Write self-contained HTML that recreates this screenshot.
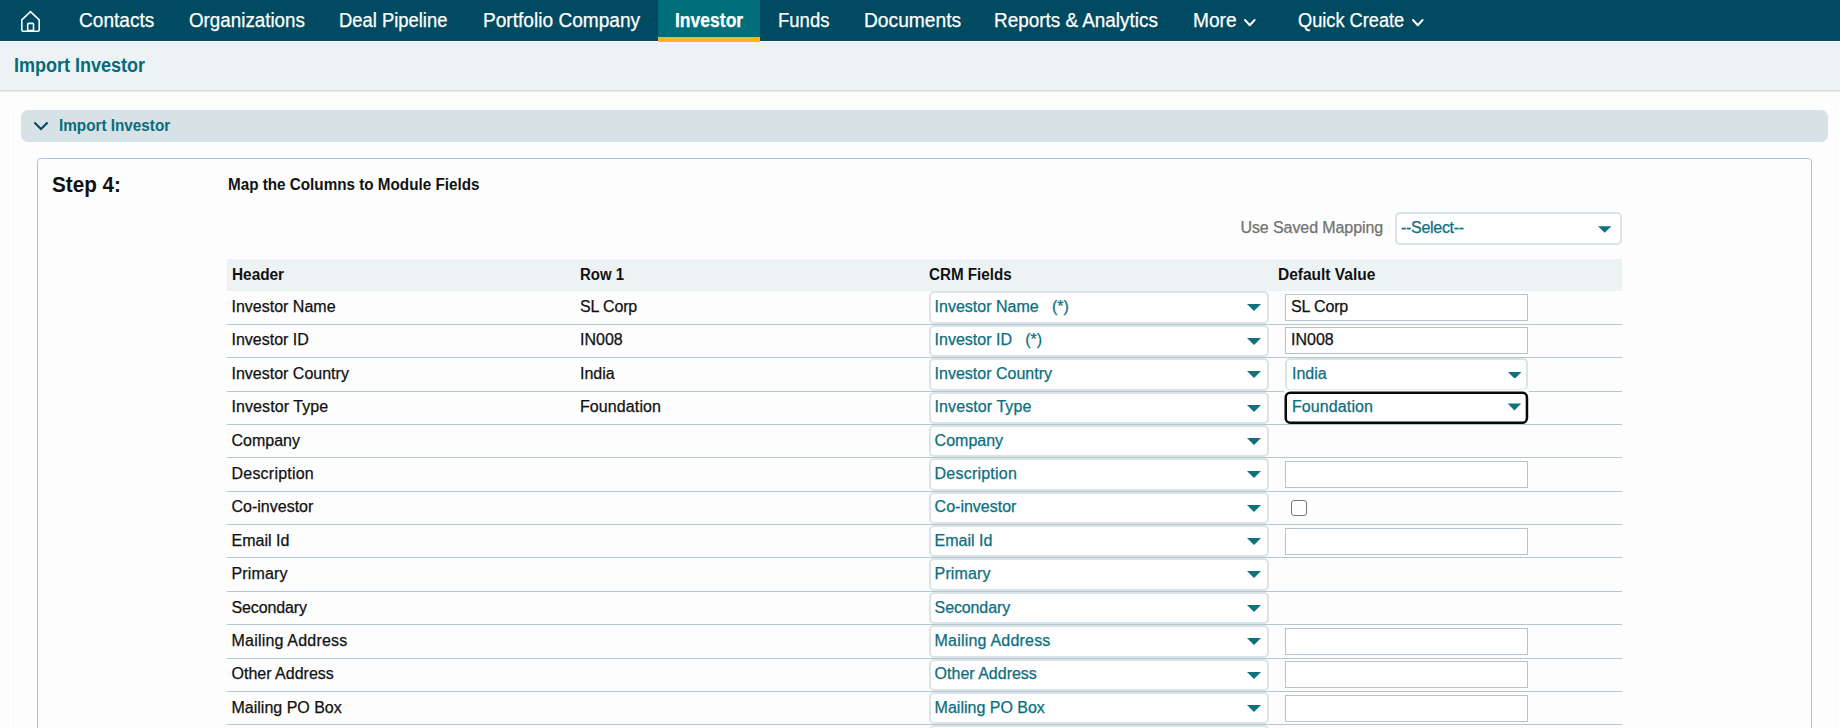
<!DOCTYPE html><html lang="en"><head><meta charset="utf-8"><title>Import Investor</title><style>
*{box-sizing:border-box;margin:0;padding:0}
html,body{width:1840px;height:728px;overflow:hidden;background:#fdfdfd;font-family:"Liberation Sans",sans-serif;font-size:16px;color:#111}
.abs{position:absolute}
#nav{position:absolute;left:0;top:0;width:1840px;height:41px;background:#004b62;z-index:2}
#nav .it{position:absolute;z-index:4;transform-origin:0 0;top:0;height:41px;line-height:41px;color:#fff;font-size:19.6px;white-space:nowrap;-webkit-text-stroke:0.25px}
#nav .act{position:absolute;left:658px;top:0;width:102px;height:42px;background:#006f7a;border-bottom:5px solid #fdb714;z-index:3}
#sub{position:absolute;left:0;top:41px;width:1840px;height:50px;background:#edf2f5;border-top:1px solid #fff;border-bottom:1px solid #d6d8da;box-shadow:0 1px 1px rgba(0,0,0,.07)}
#sub .t{position:absolute;left:13.5px;top:-2px;line-height:50px;font-size:20px;font-weight:bold;color:#046b7c;white-space:nowrap;transform-origin:0 0}
#outer{position:absolute;left:13px;top:103px;width:1823px;height:700px;border:1px solid #f8f8f8;border-top-color:#fbfbfb;border-radius:6px}
#bar{position:absolute;left:21px;top:110px;width:1807px;height:32px;background:#d7e2e6;border-radius:7px}
#bar .t{position:absolute;left:38px;top:0;line-height:32px;font-size:16px;font-weight:bold;color:#086c7d;white-space:nowrap;transform-origin:0 0}
#box{position:absolute;left:37px;top:158px;width:1775px;height:700px;border:1px solid #a8c3e0;border-radius:4px}
.step{position:absolute;left:51.5px;top:171px;font-size:22px;font-weight:bold;line-height:28px;white-space:nowrap;color:#111;transform-origin:0 0}
.map{position:absolute;left:227.5px;top:175px;font-size:16px;font-weight:bold;line-height:20px;white-space:nowrap;color:#111;transform-origin:0 0}
.usm{position:absolute;left:1240.5px;top:218px;font-size:16px;line-height:20px;color:#727272;white-space:nowrap;letter-spacing:-0.09px;-webkit-text-stroke:0.25px}
.sel{position:absolute;border:2px solid #dae4e8;border-radius:5px;background:#fefefe}
.sel .arr{position:absolute;right:6px;top:11px}
.fsel{border:2px solid #0a0a0a;border-radius:6px}
.st{position:absolute;font-size:16px;line-height:20px;white-space:nowrap;color:#0b6f80;-webkit-text-stroke:0.25px}
.inp{position:absolute;height:27px;border:1px solid #b2c5ce;background:#fefefe}
.chk{position:absolute;width:16px;height:16px;border:1.5px solid #767676;border-radius:3px;background:#fff}
#thead{position:absolute;left:227px;top:259px;width:1395px;height:32px;background:#edf2f5}
.th{position:absolute;transform-origin:0 0;top:259px;line-height:32px;font-weight:bold;font-size:16px;white-space:nowrap;color:#111}
.td{position:absolute;font-size:16px;line-height:20px;white-space:nowrap;color:#111;-webkit-text-stroke:0.25px}
.ln{position:absolute;left:227px;width:1395px;height:1px;background:#b4c7cf}
</style></head><body>
<div id="nav"><div class="act"></div>
<svg class="abs" style="left:20px;top:10px" width="22" height="23" viewBox="0 0 22 23" fill="none" stroke="#fff" stroke-width="1.6" stroke-linejoin="round" stroke-linecap="round"><path d="M1.8 9.8L10.5 1.7L19.2 9.8V19.9Q19.2 21.2 17.9 21.2H3.1Q1.8 21.2 1.8 19.9Z"/><rect x="7.7" y="13.4" width="5.8" height="7.2" rx="0.9"/></svg>
<div class="it" style="left:79.0px;transform:scaleX(0.974);">Contacts</div>
<div class="it" style="left:189.0px;transform:scaleX(0.9586);">Organizations</div>
<div class="it" style="left:338.7px;transform:scaleX(0.9391);">Deal Pipeline</div>
<div class="it" style="left:482.5px;transform:scaleX(0.9751);">Portfolio Company</div>
<div class="it" style="left:674.5px;transform:scaleX(0.8947);font-weight:bold;">Investor</div>
<div class="it" style="left:777.5px;transform:scaleX(0.9445);">Funds</div>
<div class="it" style="left:863.5px;transform:scaleX(0.98);">Documents</div>
<div class="it" style="left:994.0px;transform:scaleX(0.9645);">Reports &amp; Analytics</div>
<div class="it" style="left:1192.5px;transform:scaleX(0.9773);">More</div>
<div class="it" style="left:1297.5px;transform:scaleX(0.929);">Quick Create</div>
<svg class="abs" style="left:1243px;top:17.8px" width="14" height="10" viewBox="0 0 14 10" fill="none" stroke="#fff" stroke-width="2" stroke-linecap="round" stroke-linejoin="round"><path d="M2 2L6.8 7.2L11.6 2"/></svg>
<svg class="abs" style="left:1410.8px;top:17.8px" width="14" height="10" viewBox="0 0 14 10" fill="none" stroke="#fff" stroke-width="2" stroke-linecap="round" stroke-linejoin="round"><path d="M2 2L6.8 7.2L11.6 2"/></svg>
</div>
<div id="sub"><div class="t" style="left:13.6px;transform:scaleX(0.9)">Import Investor</div></div>
<div id="outer"></div>
<div id="bar"><svg class="abs" style="left:12px;top:10.9px" width="16" height="11" viewBox="0 0 16 11" fill="none" stroke="#064a5f" stroke-width="2.1" stroke-linecap="butt" stroke-linejoin="miter"><path d="M1.4 1.5L8 8L14.6 1.5"/></svg><div class="t" style="left:38.0px;transform:scaleX(0.955)">Import Investor</div></div>
<div id="box"></div>
<div class="step" style="left:51.5px;transform:scaleX(0.9403)">Step 4:</div>
<div class="map" style="left:227.7px;transform:scaleX(0.9525)">Map the Columns to Module Fields</div>
<div class="usm">Use Saved Mapping</div>
<div class="sel" style="left:1395px;top:212px;width:227px;height:33px"><svg class="arr" style="right:8.5px;top:11.6px" width="13.4" height="7" viewBox="0 0 14 7"><path d="M0 0H14L7 7Z" fill="#11707b"/></svg></div>
<div class="st" style="left:1401px;top:218px;letter-spacing:-0.3px">--Select--</div>
<div id="thead"></div>
<div class="th" style="left:231.58px;transform:scaleX(0.96)">Header</div>
<div class="th" style="left:580.0px;transform:scaleX(0.935)">Row 1</div>
<div class="th" style="left:928.82px;transform:scaleX(0.948)">CRM Fields</div>
<div class="th" style="left:1277.6px;transform:scaleX(0.968)">Default Value</div>
<div class="ln" style="top:324px"></div>
<div class="td" style="left:231.5px;top:297px;letter-spacing:0px">Investor Name</div>
<div class="td" style="left:580px;top:297px;letter-spacing:-0.15px">SL Corp</div>
<div class="sel" style="left:929px;top:291px;width:340px;height:33px"><svg class="arr" style="top:11px" width="14" height="7" viewBox="0 0 14 7"><path d="M0 0H14L7 7Z" fill="#11707b"/></svg></div>
<div class="st" style="left:934.6px;top:297px;letter-spacing:0px">Investor Name&nbsp;&nbsp;&nbsp;(*)</div>
<div class="inp" style="left:1285px;top:294px;width:243px"></div>
<div class="td" style="left:1291px;top:297px;letter-spacing:-0.15px">SL Corp</div>
<div class="ln" style="top:357px"></div>
<div class="td" style="left:231.5px;top:330px;letter-spacing:0px">Investor ID</div>
<div class="td" style="left:580px;top:330px;letter-spacing:0px">IN008</div>
<div class="sel" style="left:929px;top:325px;width:340px;height:32px"><svg class="arr" style="top:11px" width="14" height="7" viewBox="0 0 14 7"><path d="M0 0H14L7 7Z" fill="#11707b"/></svg></div>
<div class="st" style="left:934.6px;top:330px;letter-spacing:0px">Investor ID&nbsp;&nbsp;&nbsp;(*)</div>
<div class="inp" style="left:1285px;top:327px;width:243px"></div>
<div class="td" style="left:1291px;top:330px;letter-spacing:0px">IN008</div>
<div class="ln" style="top:391px"></div>
<div class="td" style="left:231.5px;top:364px;letter-spacing:0px">Investor Country</div>
<div class="td" style="left:580px;top:364px;letter-spacing:0px">India</div>
<div class="sel" style="left:929px;top:358px;width:340px;height:33px"><svg class="arr" style="top:11px" width="14" height="7" viewBox="0 0 14 7"><path d="M0 0H14L7 7Z" fill="#11707b"/></svg></div>
<div class="st" style="left:934.6px;top:364px;letter-spacing:0px">Investor Country</div>
<div class="sel" style="left:1285px;top:358px;width:242.7px;height:32px;border-bottom:1px solid #e6edef"><svg class="arr" style="top:11.6px;right:4.7px" width="13.4" height="6.8" viewBox="0 0 14 7"><path d="M0 0H14L7 7Z" fill="#11707b"/></svg></div>
<div class="st" style="left:1292px;top:364px;letter-spacing:0px">India</div>
<div class="ln" style="top:424px"></div>
<div class="td" style="left:231.5px;top:397px;letter-spacing:0.08px">Investor Type</div>
<div class="td" style="left:580px;top:397px;letter-spacing:0.1px">Foundation</div>
<div class="sel" style="left:929px;top:392px;width:340px;height:32px"><svg class="arr" style="top:11px" width="14" height="7" viewBox="0 0 14 7"><path d="M0 0H14L7 7Z" fill="#11707b"/></svg></div>
<div class="st" style="left:934.6px;top:397px;letter-spacing:0.08px">Investor Type</div>
<svg class="abs" style="left:1283px;top:390px" width="248" height="36" viewBox="0 0 248 36"><rect x="1" y="1" width="245" height="1.2" fill="#fdfdfd"/><rect x="2.75" y="2.8" width="241.2" height="29.9" rx="4.5" fill="#fefefe" stroke="#080808" stroke-width="2.5"/><path d="M224.7 13.6H238.1L231.4 20.4Z" fill="#11707b"/></svg>
<div class="st" style="left:1292px;top:397px;letter-spacing:0.1px">Foundation</div>
<div class="ln" style="top:457px"></div>
<div class="td" style="left:231.5px;top:431px;letter-spacing:0px">Company</div>
<div class="sel" style="left:929px;top:425px;width:340px;height:32px"><svg class="arr" style="top:11px" width="14" height="7" viewBox="0 0 14 7"><path d="M0 0H14L7 7Z" fill="#11707b"/></svg></div>
<div class="st" style="left:934.6px;top:431px;letter-spacing:0px">Company</div>
<div class="ln" style="top:491px"></div>
<div class="td" style="left:231.5px;top:464px;letter-spacing:0.22px">Description</div>
<div class="sel" style="left:929px;top:458px;width:340px;height:33px"><svg class="arr" style="top:11px" width="14" height="7" viewBox="0 0 14 7"><path d="M0 0H14L7 7Z" fill="#11707b"/></svg></div>
<div class="st" style="left:934.6px;top:464px;letter-spacing:0.22px">Description</div>
<div class="inp" style="left:1285px;top:461px;width:243px"></div>
<div class="ln" style="top:524px"></div>
<div class="td" style="left:231.5px;top:497px;letter-spacing:0px">Co-investor</div>
<div class="sel" style="left:929px;top:492px;width:340px;height:32px"><svg class="arr" style="top:11px" width="14" height="7" viewBox="0 0 14 7"><path d="M0 0H14L7 7Z" fill="#11707b"/></svg></div>
<div class="st" style="left:934.6px;top:497px;letter-spacing:0px">Co-investor</div>
<div class="chk" style="left:1291px;top:500px"></div>
<div class="ln" style="top:557px"></div>
<div class="td" style="left:231.5px;top:531px;letter-spacing:0px">Email Id</div>
<div class="sel" style="left:929px;top:525px;width:340px;height:32px"><svg class="arr" style="top:11px" width="14" height="7" viewBox="0 0 14 7"><path d="M0 0H14L7 7Z" fill="#11707b"/></svg></div>
<div class="st" style="left:934.6px;top:531px;letter-spacing:0px">Email Id</div>
<div class="inp" style="left:1285px;top:528px;width:243px"></div>
<div class="ln" style="top:591px"></div>
<div class="td" style="left:231.5px;top:564px;letter-spacing:0.14px">Primary</div>
<div class="sel" style="left:929px;top:558px;width:340px;height:33px"><svg class="arr" style="top:11px" width="14" height="7" viewBox="0 0 14 7"><path d="M0 0H14L7 7Z" fill="#11707b"/></svg></div>
<div class="st" style="left:934.6px;top:564px;letter-spacing:0.14px">Primary</div>
<div class="ln" style="top:624px"></div>
<div class="td" style="left:231.5px;top:598px;letter-spacing:-0.12px">Secondary</div>
<div class="sel" style="left:929px;top:592px;width:340px;height:32px"><svg class="arr" style="top:11px" width="14" height="7" viewBox="0 0 14 7"><path d="M0 0H14L7 7Z" fill="#11707b"/></svg></div>
<div class="st" style="left:934.6px;top:598px;letter-spacing:-0.12px">Secondary</div>
<div class="ln" style="top:658px"></div>
<div class="td" style="left:231.5px;top:631px;letter-spacing:0.2px">Mailing Address</div>
<div class="sel" style="left:929px;top:625px;width:340px;height:33px"><svg class="arr" style="top:11px" width="14" height="7" viewBox="0 0 14 7"><path d="M0 0H14L7 7Z" fill="#11707b"/></svg></div>
<div class="st" style="left:934.6px;top:631px;letter-spacing:0.2px">Mailing Address</div>
<div class="inp" style="left:1285px;top:628px;width:243px"></div>
<div class="ln" style="top:691px"></div>
<div class="td" style="left:231.5px;top:664px;letter-spacing:0px">Other Address</div>
<div class="sel" style="left:929px;top:659px;width:340px;height:32px"><svg class="arr" style="top:11px" width="14" height="7" viewBox="0 0 14 7"><path d="M0 0H14L7 7Z" fill="#11707b"/></svg></div>
<div class="st" style="left:934.6px;top:664px;letter-spacing:0px">Other Address</div>
<div class="inp" style="left:1285px;top:661px;width:243px"></div>
<div class="ln" style="top:724px"></div>
<div class="td" style="left:231.5px;top:698px;letter-spacing:0px">Mailing PO Box</div>
<div class="sel" style="left:929px;top:692px;width:340px;height:32px"><svg class="arr" style="top:11px" width="14" height="7" viewBox="0 0 14 7"><path d="M0 0H14L7 7Z" fill="#11707b"/></svg></div>
<div class="st" style="left:934.6px;top:698px;letter-spacing:0px">Mailing PO Box</div>
<div class="inp" style="left:1285px;top:695px;width:243px"></div>
<div class="ln" style="top:758px"></div>
<div class="td" style="left:231.5px;top:731px;letter-spacing:0px">Other PO Box</div>
<div class="sel" style="left:929px;top:725px;width:340px;height:33px"><svg class="arr" style="top:11px" width="14" height="7" viewBox="0 0 14 7"><path d="M0 0H14L7 7Z" fill="#11707b"/></svg></div>
<div class="st" style="left:934.6px;top:731px;letter-spacing:0px">Other PO Box</div>
<div class="inp" style="left:1285px;top:728px;width:243px"></div>
</body></html>
